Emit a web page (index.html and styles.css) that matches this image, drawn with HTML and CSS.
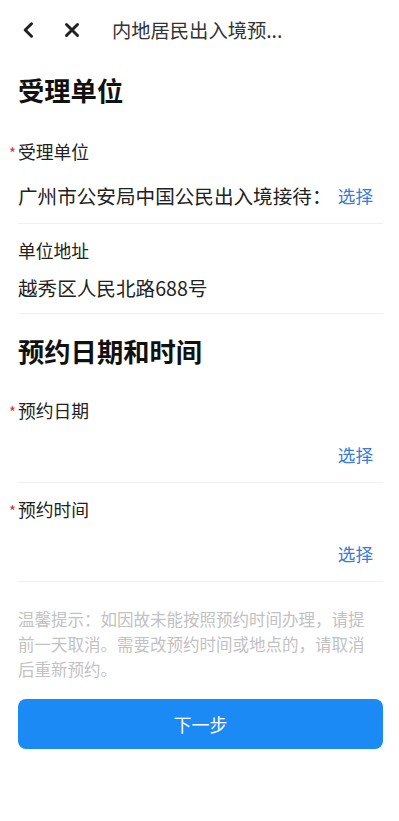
FILE: index.html
```html
<!DOCTYPE html>
<html lang="zh-CN">
<head>
<meta charset="utf-8">
<title>内地居民出入境预约</title>
<link rel="stylesheet" href="styles.css">
</head>
<body>
<header class="topbar">
  <svg class="icon-back" width="12" height="16" viewBox="0 0 12 16"><path d="M9.5 1.8 L3.2 8 L9.5 14.2" fill="none" stroke="#222" stroke-width="3" stroke-linecap="round" stroke-linejoin="round"/></svg>
  <svg class="icon-close" width="16" height="16" viewBox="0 0 16 16"><path d="M2.5 2.5 L13.5 13.5 M13.5 2.5 L2.5 13.5" fill="none" stroke="#222" stroke-width="3" stroke-linecap="round"/></svg>
  <div class="topbar-title">内地居民出入境预...</div>
</header>
<main class="page">
  <section class="group">
    <h2 class="section-title">受理单位</h2>
    <div class="field">
      <div class="label"><span class="req">*</span>受理单位</div>
      <div class="row row-select">
        <div class="value">广州市公安局中国公民出入境接待：</div>
        <div class="pick">选择</div>
      </div>
    </div>
    <div class="field">
      <div class="label">单位地址</div>
      <div class="row row-plain">
        <div class="value">越秀区人民北路688号</div>
      </div>
    </div>
  </section>
  <section class="group">
    <h2 class="section-title second">预约日期和时间</h2>
    <div class="field">
      <div class="label"><span class="req">*</span>预约日期</div>
      <div class="row row-select">
        <div class="value"></div>
        <div class="pick">选择</div>
      </div>
    </div>
    <div class="field">
      <div class="label"><span class="req">*</span>预约时间</div>
      <div class="row row-select">
        <div class="value"></div>
        <div class="pick">选择</div>
      </div>
    </div>
  </section>
  <p class="tip">温馨提示：如因故未能按照预约时间办理，请提前一天取消。需要改预约时间或地点的，请取消后重新预约。</p>
  <button class="next">下一步</button>
</main>
</body>
</html>
```
FILE: styles.css
```css
* { box-sizing: border-box; }
html, body { margin: 0; padding: 0; background: #fff; }
body {
  font-family: "Noto Sans CJK SC", "Noto Sans", "Liberation Sans", sans-serif;
  color: #222;
  width: 399px;
}
.topbar {
  height: 60px;
  display: flex;
  align-items: center;
  padding-left: 22px;
}
.icon-back { flex: none; }
.icon-close { flex: none; margin-left: 30px; }
.topbar-title {
  margin-left: 32px;
  font-size: 19.3px;
  color: #333;
  line-height: 24px;
  white-space: nowrap;
}
.page { padding: 0 16px 0 18px; }
.section-title {
  margin: 0;
  font-size: 26.3px;
  font-weight: 700;
  line-height: 36px;
  color: #111;
  padding: 12px 0 17px;
}
.section-title.second { padding: 19px 0 15px; }
.field { border-bottom: 1px solid #f0f0f0; }
.label {
  display: flex;
  font-size: 17.8px;
  line-height: 24px;
  color: #222;
  padding-top: 14px;
}
.req {
  width: 9px;
  margin-left: -9px;
  color: #d7323b;
  font-size: 15px;
  line-height: 24px;
  position: relative;
  top: 2px;
}
.row {
  display: flex;
  align-items: center;
}
.row-select { height: 60px; padding-top: 4px; padding-right: 10px; }
.row-plain { height: 51px; }
.value {
  flex: 1;
  min-width: 0;
  font-size: 19.6px;
  color: #222;
  white-space: nowrap;
}
.pick {
  flex: none;
  margin-left: 12px;
  font-size: 17.6px;
  color: #3a7cd6;
}
.tip {
  margin: 25px 0 0;
  padding-right: 10px;
  font-size: 16.5px;
  line-height: 25px;
  color: #c2c2c2;
}
.next {
  display: block;
  width: 100%;
  height: 50px;
  margin-top: 17px;
  border: none;
  border-radius: 8px;
  background: #1b8af5;
  color: #fff;
  font-family: inherit;
  font-size: 18px;
  padding: 0;
}
```
